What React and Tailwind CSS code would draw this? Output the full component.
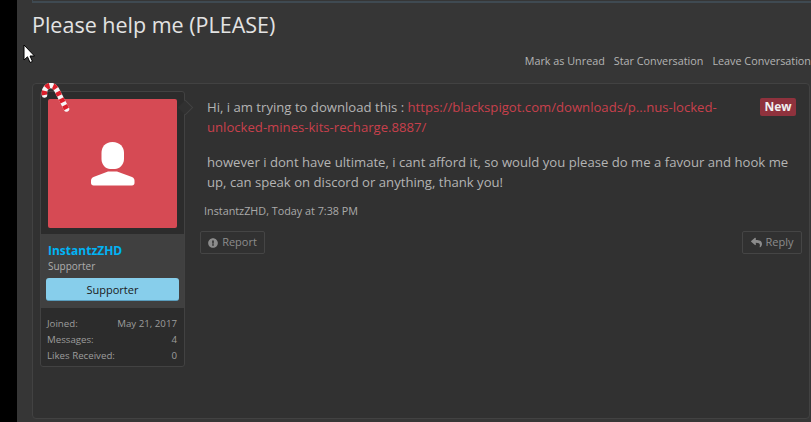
import { FaExclamationCircle, FaReply } from "react-icons/fa";

const CANE = "M4.5 12 C3.5 5 8 2.5 11 2.5 C13.5 2.5 15 4 16.5 6.5 L26.5 26";

const CandyCane = () => (
  <svg width="30" height="30" viewBox="0 0 30 30" className="absolute left-[-1px] top-[-9px]" fill="none">
    <path d={CANE} stroke="#f6f6f6" strokeWidth="5.5" strokeLinecap="round" />
    <path d={CANE} stroke="#dc1f2b" strokeWidth="5.5" strokeDasharray="4 3.6" />
  </svg>
);

const Cursor = () => (
  <svg width="13" height="20" viewBox="0 0 13 20" className="absolute left-[23px] top-[44px]">
    <path d="M1 1 L1 16 L4.5 12.8 L7 18.5 L9.5 17.4 L7 12 L11.5 12 Z" fill="#fff" stroke="#000" strokeWidth="1" />
  </svg>
);

const Stat = ({ label, value, className }) => (
  <div className={`flex justify-between ${className}`}>
    <span>{label}</span>
    <span>{value}</span>
  </div>
);

export default function App() {
  return (
    <div className="relative flex h-[422px] w-[811px] overflow-hidden bg-black font-['Open_Sans',sans-serif]">
      <Cursor />
      <div className="ml-[17px] flex-1 bg-[#363636] pl-[15px]">
        <div className="h-[3px] border-b-2 border-l border-[#3f4a52]" />
        <h1 className="mt-[7px] text-[21.5px] leading-[30px] text-[#e3e3e3]">Please help me (PLEASE)</h1>

        <div className="mt-[13px] flex h-[16px] justify-end gap-[9px] whitespace-nowrap text-[10.8px] leading-[16px] text-[#b4b4b4]">
          <span>Mark as Unread</span>
          <span>Star Conversation</span>
          <span>Leave Conversation</span>
        </div>

        <div className="mt-[14px] flex h-[336px] w-[778px] rounded-[4px] border border-[#424242] bg-[#313131] pl-[7px] pt-[7px]">
          <aside className="relative h-[276px] w-[145px] shrink-0 rounded-[3px] border border-[#424242] bg-[#2c2c2c]">
            <div className="absolute right-[-7px] top-[10px] h-[11px] w-[11px] rotate-45 border-r border-t border-[#424242] bg-[#313131]" />
            <div className="p-[7px] pb-[6px]">
              <div className="flex h-[129px] w-[129px] items-center justify-center rounded-[2px] bg-[#d64a54]">
                <svg width="44" height="44" viewBox="0 0 44 44" fill="#fff">
                  <path d="M21.5 0 C29 0 33 5 33 11 V17 C33 23 28 27 24 27 H19 C15 27 10.5 23 10.5 17 V11 C10.5 5 14 0 21.5 0 Z" />
                  <path d="M17 29.5 H26 L41 35 C43 36 43.5 37 43.5 39 V41 C43.5 42.5 42.5 43.5 41 43.5 H2.5 C1 43.5 0 42.5 0 41 V39 C0 37 0.5 36 2.5 35 Z" />
                </svg>
              </div>
            </div>
            <div className="h-[74px] bg-[#404040] px-[5px] pt-[9px]">
              <div className="pl-[2px] text-[12px] font-bold leading-[16px] text-[#00b4f5]">InstantzZHD</div>
              <div className="pl-[2px] text-[10px] leading-[14px] text-[#aeaeae]">Supporter</div>
              <div className="mt-[5px] h-[23px] w-[133px] rounded-[3px] border-b border-[#5a9dbd] bg-[#87ceeb] text-center text-[11px] leading-[23px] text-[#1a1a1a]">
                Supporter
              </div>
            </div>
            <div className="pl-[6px] pr-[7px] pt-[9px] text-[9.7px] leading-[14px] text-[#9c9c9c]">
              <Stat label="Joined:" value="May 21, 2017" />
              <Stat label="Messages:" value="4" className="mt-[2px]" />
              <Stat label="Likes Received:" value="0" className="mt-[2px]" />
            </div>
            <CandyCane />
          </aside>

          <div className="min-w-0 flex-1 pl-[15px] pr-[7px]">
            <div className="relative pl-[7px] pt-[6px] text-[13.13px] leading-[20px] text-[#b4b4b4]">
              <span className="absolute right-[6px] top-[7px] h-[18px] w-[36px] rounded-[2px] bg-[#8f323d] text-center text-[12px] font-bold leading-[18px] text-[#f0f0f0]">New</span>
              <p className="w-[540px]">
                Hi, i am trying to download this : <span className="text-[#c8404c]">https://blackspigot.com/downloads/p...nus-locked-unlocked-mines-kits-recharge.8887/</span>
              </p>
              <p className="mt-[15px] w-[590px]">
                however i dont have ultimate, i cant afford it, so would you please do me a favour and hook me up, can speak on discord or anything, thank you!
              </p>
            </div>
            <div className="mt-[12px] pl-[4px] text-[10.8px] leading-[14px] text-[#aaaaaa]">InstantzZHD, Today at 7:38 PM</div>
            <div className="mt-[13px] flex justify-between text-[11px] text-[#8c8c8c]">
              <button className="flex h-[23px] w-[65px] items-center justify-center gap-[4px] rounded-[2px] border border-[#454545]">
                <FaExclamationCircle className="h-[10px] w-[10px]" />
                <span>Report</span>
              </button>
              <button className="flex h-[23px] w-[60px] items-center justify-center gap-[4px] rounded-[2px] border border-[#454545]">
                <FaReply className="h-[11px] w-[11px]" />
                <span>Reply</span>
              </button>
            </div>
          </div>
        </div>
      </div>
    </div>
  );
}
